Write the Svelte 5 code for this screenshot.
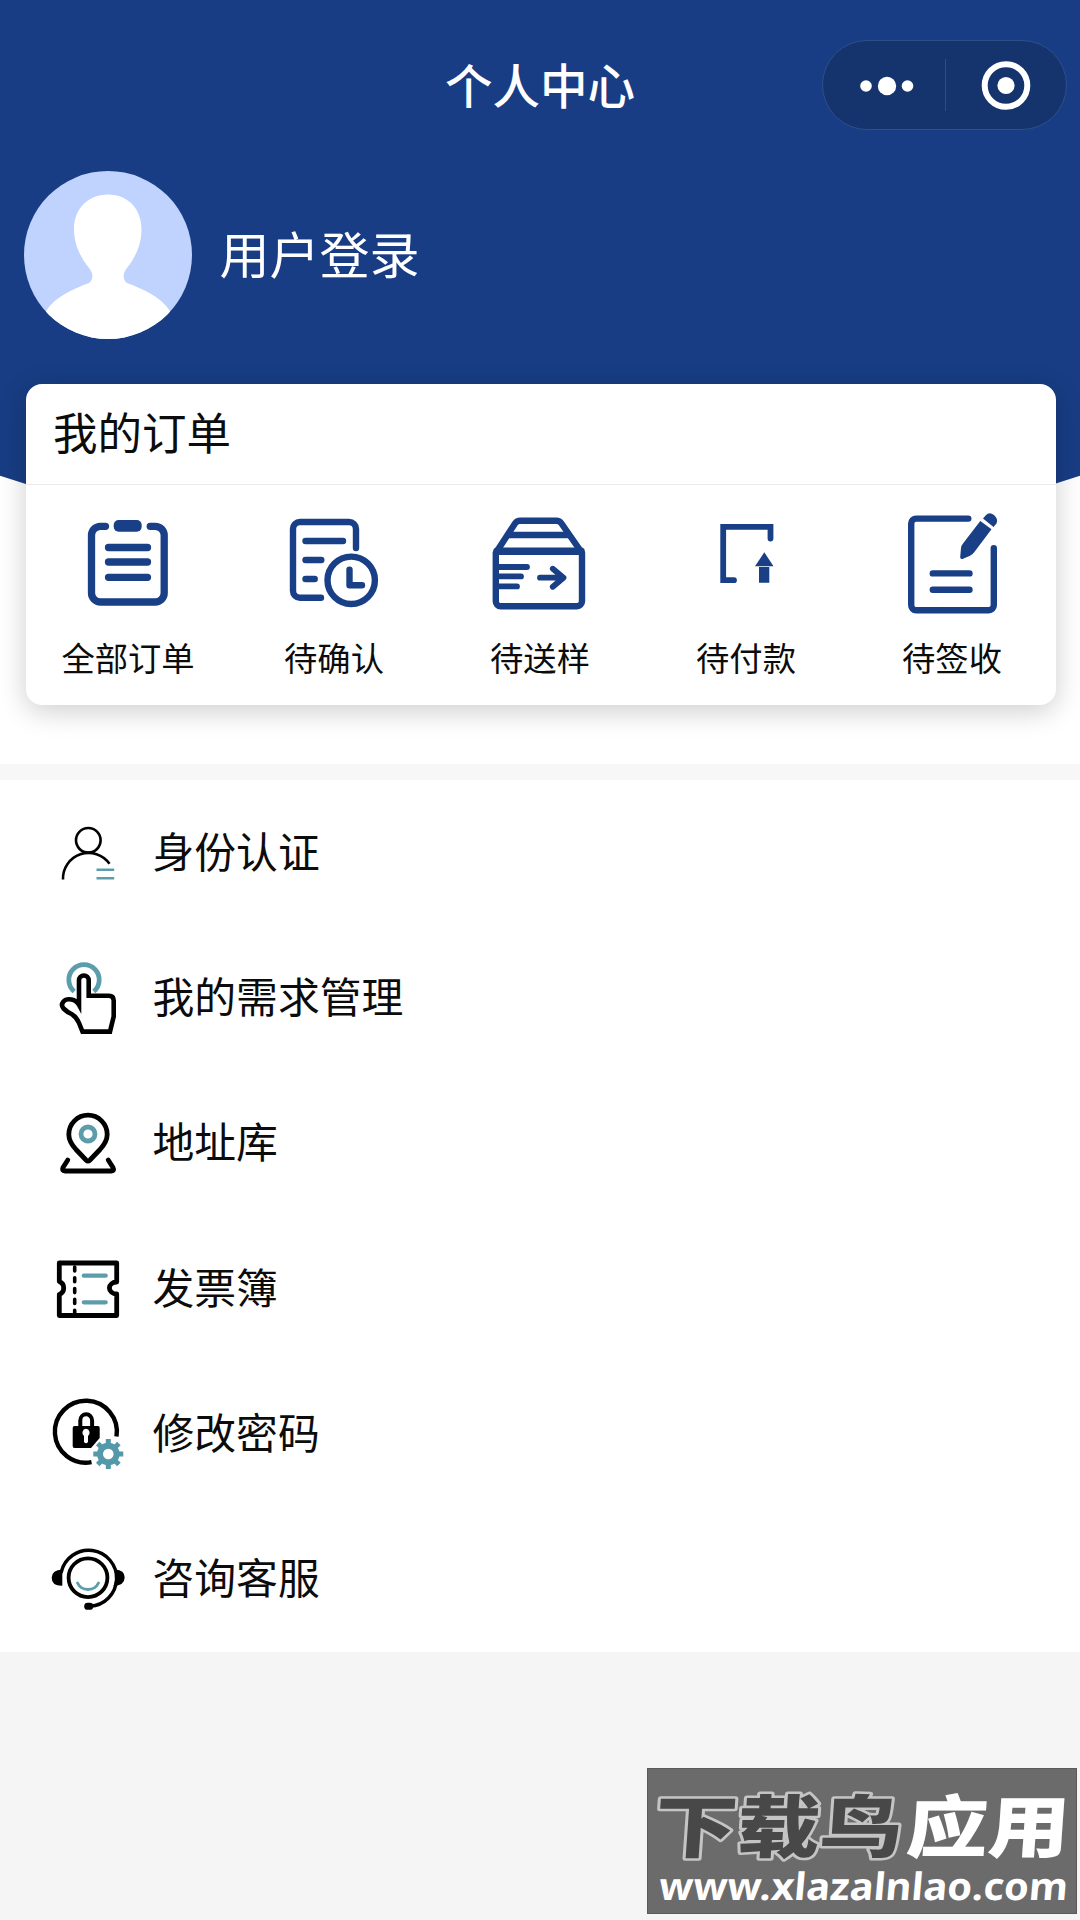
<script>
	const orders = [
		{ icon: 'all', label: '全部订单' },
		{ icon: 'confirm', label: '待确认' },
		{ icon: 'sample', label: '待送样' },
		{ icon: 'pay', label: '待付款' },
		{ icon: 'sign', label: '待签收' }
	]

	const menus = [
		{ icon: 'identity', label: '身份认证' },
		{ icon: 'demand', label: '我的需求管理' },
		{ icon: 'address', label: '地址库' },
		{ icon: 'invoice', label: '发票簿' },
		{ icon: 'password', label: '修改密码' },
		{ icon: 'service', label: '咨询客服' }
	]

	const teeth = [0, 45, 90, 135, 180, 225, 270, 315]
</script>

<main class="page">
	<section class="top">
		<div class="top-bg"></div>
		<header class="navbar">
			<h1>个人中心</h1>
			<div class="capsule">
				<svg class="more" viewBox="0 0 122 88">
					<circle cx="43" cy="45" r="5.8"/>
					<circle cx="64" cy="45" r="9.2"/>
					<circle cx="84.5" cy="45" r="5.8"/>
				</svg>
				<span class="line"></span>
				<svg class="close" viewBox="0 0 120 88">
					<circle cx="60" cy="44.5" r="21.3" class="ring"/>
					<circle cx="60" cy="44.5" r="8.6"/>
				</svg>
			</div>
		</header>

		<div class="user">
			<svg class="avatar" viewBox="0 0 168 168">
				<defs>
					<clipPath id="avatar-clip"><circle cx="84" cy="84" r="84"/></clipPath>
				</defs>
				<g clip-path="url(#avatar-clip)">
					<rect width="168" height="168" fill="#bfd3fe"/>
					<path fill="#fff" d="M84 23.5C104 23.5 117.5 38 117.5 58C117.5 74 111 87 103 97C98 103 99 109 103 112C119 118 137 126 146 140V168H22V140C31 126 49 118 65 112C69 109 70 103 65 97C57 87 50 74 50 58C50 38 64 23.5 84 23.5Z"/>
				</g>
			</svg>
			<span class="name">用户登录</span>
		</div>

		<div class="card">
			<h2>我的订单</h2>
			<ul class="orders">
				{#each orders as order}
					<li>
						<svg class="order-icon" viewBox="0 0 100 110">
							{#if order.icon === 'all'}
								<g stroke-width="7.3">
									<path d="M26.5 16.3H21.5A9 9 0 0 0 12.5 25.3V83A9 9 0 0 0 21.5 92H76.2A9 9 0 0 0 85.2 83V25.3A9 9 0 0 0 76.2 16.3H71.2"/>
									<path d="M29.5 37.5H68.5M29.5 52H68.5M29.5 67.3H68.5"/>
								</g>
								<rect class="solid" x="34.7" y="10" width="28" height="11.7" rx="5"/>
							{:else if order.icon === 'confirm'}
								<g stroke-width="6.4">
									<path d="M36 87.7H15A7 7 0 0 1 8 80.7V19A7 7 0 0 1 15 12H64A7 7 0 0 1 71 19V38"/>
									<path d="M20.5 31H58M20.5 50H36.3M20.5 69H29.7"/>
									<circle cx="66.2" cy="70.3" r="23.7"/>
									<path d="M64.5 59.7V75.3H77"/>
								</g>
							{:else if order.icon === 'sample'}
								<g stroke-width="6.4">
									<path d="M4.8 43V91A5 5 0 0 0 9.8 96.3H86A5 5 0 0 0 91 91.3V43L70.5 13.5Q68.5 10.7 65.5 10.7H29Q26 10.7 24 13.5Z"/>
									<path d="M17.5 25H77.5"/>
									<path stroke-width="7.5" d="M6 41.2H90"/>
									<path stroke-width="5.8" d="M6 57H36M6 66.4H30M6 76.4H26M49 67.7H71M61.8 58.7L72.5 67.7L61.8 76.8"/>
								</g>
							{:else if order.icon === 'pay'}
								<path stroke-width="5.8" stroke-linejoin="miter" d="M73.5 28.5V16.8H26.2V70.2H37"/>
								<path class="solid" d="M67.3 42.3L76.5 56.2H58ZM62 57H72.3V72.7H62Z"/>
							{:else}
								<g stroke-width="6.4">
									<path d="M65.3 8.6H13.2A5 5 0 0 0 8.2 13.6V95A5 5 0 0 0 13.2 100.2H85.8A5 5 0 0 0 90.8 95.2V38.3"/>
									<path d="M29.8 63.4H66.5M29.8 79.7H66.5"/>
								</g>
								<path class="solid" d="M77.3 11L88.5 19.3L71 42.5Q69.5 44.5 67 45.7L59.5 49Q57 49.5 57.2 47L58 38Q58.3 35.5 60 33.5ZM80 8.5L83 5Q86.5 1.3 91 5Q95.8 9.5 93.5 13.5L90.5 17Z"/>
							{/if}
						</svg>
						<span>{order.label}</span>
					</li>
				{/each}
			</ul>
		</div>
	</section>

	<ul class="menu">
		{#each menus as menu}
			<li>
				<svg class="menu-icon" viewBox="0 0 80 80">
					{#if menu.icon === 'identity'}
						<g stroke-width="2.6">
							<circle cx="41.3" cy="27.3" r="12.3"/>
							<path stroke-linecap="butt" d="M16 66.5A25.6 25.6 0 0 1 62.5 50.8"/>
							<path class="teal" stroke-linecap="butt" d="M49.5 56.7H67.2M49.5 65.3H67.2"/>
						</g>
					{:else if menu.icon === 'demand'}
						<path class="teal" stroke-width="4.8" stroke-linecap="butt" d="M27.2 33.5A15.2 15.2 0 1 1 46.8 33.5"/>
						<path stroke-width="4.6" stroke-linejoin="miter" fill="#fff" d="M32 47V22.5A4.85 5 0 0 1 41.7 22.5V37.7H62Q66.7 37.7 66.7 42.5V58.5L63 73.6H35.5L32 65Q29.5 59 24.5 56Q20 54 16.5 50.5Q13.5 47 16.5 43.5Q19 40.5 24.5 41.5Q29.5 42.5 32 47Z"/>
					{:else if menu.icon === 'address'}
						<g stroke-width="4.8">
							<path d="M41 12.2A19.2 19.2 0 0 1 60.2 31.4C60.2 37 57 42 53 46.5L43 57Q41 59 39 57L29 46.5C25 42 21.8 37 21.8 31.4A19.2 19.2 0 0 1 41 12.2Z"/>
							<path d="M20.8 57L16 64.5Q14.5 68 18 68H64.5Q67.8 68 66 64.5L61.2 57"/>
							<circle class="teal" cx="41" cy="31" r="7"/>
						</g>
					{:else if menu.icon === 'invoice'}
						<path stroke-width="4.8" stroke-linecap="butt" d="M12.3 14H69.7V33A7.3 6 0 0 0 69.7 45V66.5H12.3V45.5A7 7 0 0 0 12.3 32.5Z"/>
						<path stroke-width="3.6" stroke-dasharray="4 6.8" d="M27.7 18V64"/>
						<path class="teal" stroke-width="4.3" d="M36.8 26.7H58.7M36.8 53.3H58.7"/>
					{:else if menu.icon === 'password'}
						<path stroke-width="4.4" stroke-linecap="butt" d="M69.5 42.5A31 31 0 1 0 44.5 68.2"/>
						<path stroke-width="4" d="M33.3 34V26.5A5.9 6.2 0 0 1 45.1 26.5V34"/>
						<path class="black" d="M27.5 32H51Q52.7 32 52.7 34V44L44 54H27.5Q25.7 54 25.7 52V34Q25.7 32 27.5 32Z"/>
						<path class="white" d="M39 34.8A4 4 0 0 0 37 42V48Q39 50.5 41 48V42A4 4 0 0 0 39 34.8Z"/>
						<g class="gear" transform="translate(61.3 60)">
							<circle r="8.3"/>
							{#each teeth as deg}
								<path d="M0 -10V-15" transform="rotate({deg})"/>
							{/each}
						</g>
					{:else}
						<circle cx="41" cy="38.7" r="19.4" stroke-width="3.8"/>
						<path stroke-width="3.4" d="M14.3 33A28 28 0 1 1 43 67.2"/>
						<path class="black" d="M15.3 30.5V46.7Q4.5 47 4.7 38.5Q5 31 15.3 30.5ZM68.5 30.5Q77.5 31 77.7 38.5Q77.5 46.5 66.5 47Q69.5 39 68.5 30.5Z"/>
						<rect class="black" x="37.2" y="63.8" width="9" height="7" rx="3.4"/>
						<path class="teal" stroke-width="2.9" d="M30.5 44Q33.5 50.3 41 50.5Q48.5 50.3 51.5 44"/>
					{/if}
				</svg>
				<span>{menu.label}</span>
			</li>
		{/each}
	</ul>

	<footer>
		<svg class="mark" viewBox="0 0 430 146">
			<rect x="0.5" y="0.5" width="429" height="145" fill="#6b6b6b" stroke="#5a5a5a"/>
			<g class="brand" transform="translate(6 84) skewX(-4)">
				<text class="outline" textLength="248" lengthAdjust="spacingAndGlyphs">下载鸟</text>
				<text class="dark" textLength="248" lengthAdjust="spacingAndGlyphs">下载鸟</text>
				<text class="light" x="252" textLength="163" lengthAdjust="spacingAndGlyphs">应用</text>
			</g>
			<g transform="translate(11 132) skewX(-5)">
				<text class="url" textLength="409" lengthAdjust="spacingAndGlyphs">www.xlazalnlao.com</text>
			</g>
		</svg>
	</footer>
</main>

<style>
	:global(body) {
		background: #f5f5f5;
	}

	.page {
		width: 1080px;
		height: 1920px;
		display: flex;
		flex-direction: column;
		overflow: hidden;
		color: #0c0c0c;
		font-family: "Noto Sans CJK SC", sans-serif;
		background: #f5f5f5;
	}

	h1, h2, ul {
		margin: 0;
		padding: 0;
		list-style: none;
		font-weight: 400;
	}

	svg {
		display: block;
		flex-shrink: 0;
	}

	.top {
		position: relative;
		height: 764px;
		flex-shrink: 0;
		background: #fff;
		border-bottom: 16px solid #f7f7f7;
	}

	/* blue backdrop with the arched bottom edge */
	.top-bg {
		position: absolute;
		top: 0;
		left: 0;
		width: 100%;
		height: 560px;
		background: #183d84;
		clip-path: ellipse(1033px 558px at 50% 0);
	}

	.navbar, .user, .card {
		position: relative;
	}

	.navbar {
		height: 171px;
		display: grid;
		grid-template-columns: 1fr auto 1fr;
		box-sizing: border-box;
		padding: 40px 13px 0;
	}

	h1 {
		grid-column: 2;
		height: 88px;
		line-height: 88px;
		font-size: 47.5px;
		font-weight: 500;
		color: #fff;
	}

	.capsule {
		justify-self: end;
		display: flex;
		align-items: center;
		box-sizing: border-box;
		width: 245px;
		height: 90px;
		border: 1.5px solid #2f4f8b;
		border-radius: 45px;
		background: #15336c;
		fill: #fff;
	}

	.more {
		width: 122px;
		height: 88px;
	}

	.close {
		width: 120px;
		height: 88px;
	}

	.capsule .line {
		width: 1px;
		height: 52px;
		background: #2f4d84;
	}

	.ring {
		fill: none;
		stroke: #fff;
		stroke-width: 6;
	}

	.user {
		height: 213px;
		display: flex;
		align-items: flex-start;
		padding-left: 23.5px;
	}

	.avatar {
		width: 168px;
		height: 168px;
	}

	.name {
		margin-left: 28px;
		line-height: 162px;
		font-size: 50px;
		color: #fff;
	}

	.card {
		width: 1030px;
		height: 321px;
		margin-left: 26px;
		border-radius: 16px;
		background: #fff;
		box-shadow: 0 6px 28px rgba(0, 0, 0, .2);
	}

	h2 {
		height: 101px;
		line-height: 94px;
		box-sizing: border-box;
		padding-left: 27px;
		border-bottom: 1px solid #ebebeb;
		font-size: 44.5px;
	}

	.orders {
		display: grid;
		grid-template-columns: repeat(5, 1fr);
	}

	.orders li {
		display: flex;
		flex-direction: column;
		align-items: center;
		padding-top: 25px;
	}

	.orders span {
		margin-top: 12px;
		padding-right: 2px;
		line-height: 50px;
		font-size: 33.3px;
	}

	.order-icon {
		width: 100px;
		height: 110px;
		fill: none;
		stroke: #193f86;
		stroke-linecap: round;
		stroke-linejoin: round;
	}

	.solid {
		fill: #193f86;
		stroke: none;
	}

	.menu {
		display: flex;
		flex-direction: column;
		height: 872px;
		flex-shrink: 0;
		background: #fff;
	}

	.menu li {
		flex: 1;
		display: flex;
		align-items: center;
		padding-left: 47px;
	}

	.menu span {
		margin-left: 25.5px;
		padding-bottom: 6px;
		font-size: 41.8px;
		line-height: 60px;
	}

	.menu-icon {
		width: 80px;
		height: 80px;
		fill: none;
		stroke: #000;
		stroke-linecap: round;
		stroke-linejoin: round;
	}

	.teal {
		stroke: #5c9dac;
	}

	.black {
		fill: #000;
		stroke: none;
	}

	.white {
		fill: #fff;
		stroke: none;
	}

	.gear {
		stroke: #5399a9;
		stroke-width: 6;
	}

	.gear path {
		stroke-width: 5;
		stroke-linecap: butt;
	}

	footer {
		flex: 1;
		display: flex;
		justify-content: flex-end;
		align-items: flex-end;
		padding: 0 3px 6px 0;
	}

	.mark {
		width: 430px;
		height: 146px;
	}

	.brand text {
		font-size: 68px;
		font-weight: 900;
	}

	.outline {
		fill: #c4c4c4;
		stroke: #c4c4c4;
		stroke-width: 5;
		stroke-linejoin: round;
	}

	.dark {
		fill: #484848;
	}

	.light {
		fill: #fff;
	}

	.url {
		font-family: "Noto Sans", "Open Sans", sans-serif;
		font-size: 38px;
		font-weight: 700;
		fill: #fff;
	}
</style>
